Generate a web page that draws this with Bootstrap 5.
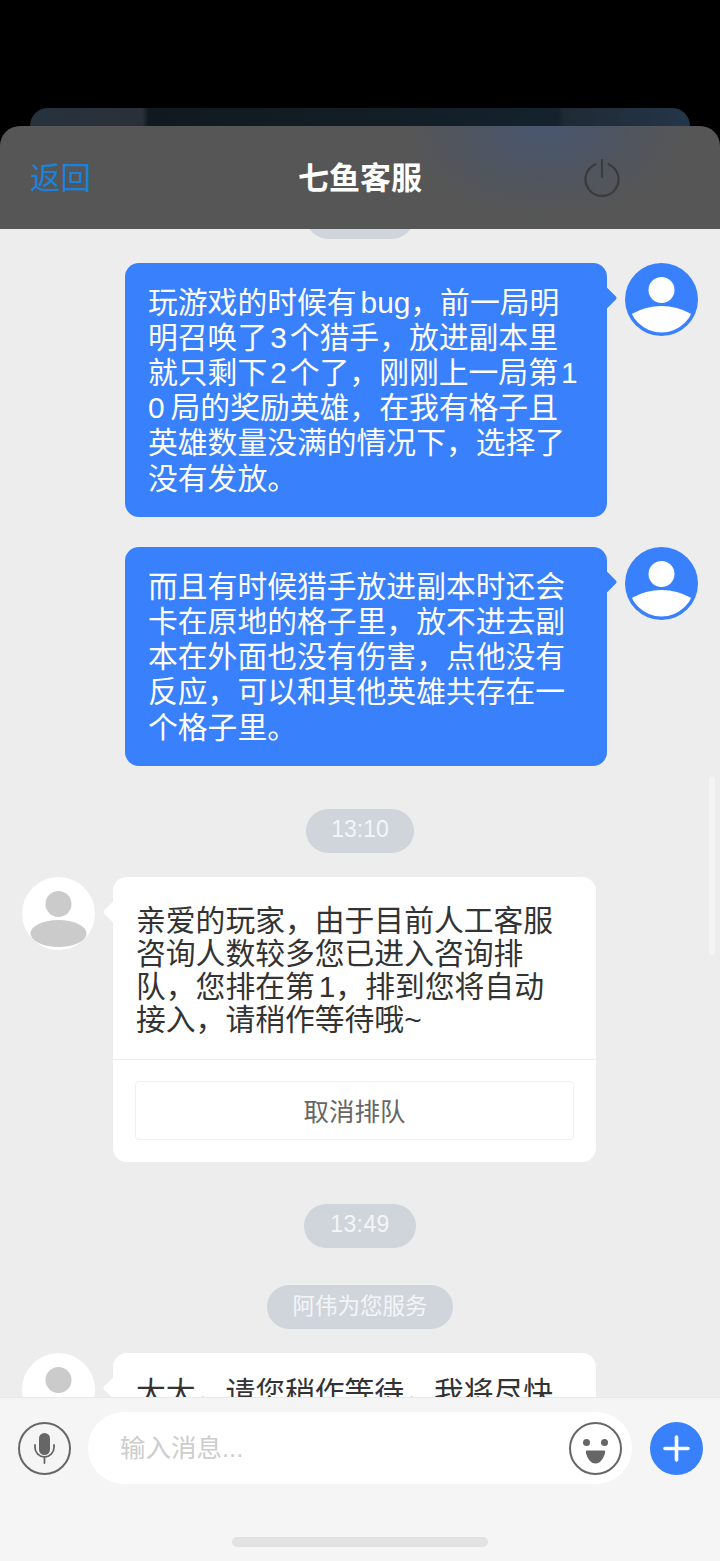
<!DOCTYPE html>
<html lang="zh-CN">
<head>
    <meta charset="UTF-8">
    <meta name="viewport" content="width=device-width, initial-scale=1.0">
    <title>七鱼客服</title>
    <link rel="stylesheet" href="https://cdn.jsdelivr.net/npm/bootstrap@5.3.0/dist/css/bootstrap.min.css">
    <script src="https://cdn.jsdelivr.net/npm/bootstrap@5.3.0/dist/js/bootstrap.bundle.min.js"></script>
    <style>
        html, body { height: 1561px; overflow: hidden; }
        body {
            background: #000;
            font-family: "Liberation Sans", "Noto Sans CJK SC", sans-serif;
        }
        .screen { width: 720px; height: 1561px; padding-top: 108px; }
        .back-sheet {
            height: 18px;
            margin: 0 30px;
            border-radius: 18px 18px 0 0;
            background: linear-gradient(90deg, #27323c 0, #2a303a 17%, #10191f 18%, #14222c 80%, #1f2a34 81%, #24364a 100%);
        }
        .chat-head {
            height: 103px;
            padding: 0 30px 0 30px;
            border-radius: 20px 20px 0 0;
            background: radial-gradient(ellipse 140px 90px at 545px 0, #47566f 0, #4f5560 55%, #565656 100%), #565656;
        }
        .head-back { width: 120px; padding-top: 1px; font-size: 30.5px; color: #1a82dc; line-height: 1; }
        .head-title { padding-top: 1px; font-size: 31px; font-weight: 700; color: #fff; line-height: 1; }
        .head-power { width: 120px; padding-right: 69px; }
        .chat-scroll { height: 1168px; background: #ededed; }
        .chat-flow { margin-top: -34px; position: relative; }
        .scroll-thumb {
            position: absolute; right: 5px; top: 582px;
            width: 6px; height: 178px;
            border-radius: 3px; background: #f4f4f4;
        }
        .time-pill {
            height: 44px; padding: 0 25px;
            border-radius: 22px;
            background: #d0d5dc; color: #f4f5f7;
            font-size: 22.5px; line-height: 43px;
        }
        .time-clock { padding: 0 25.5px; font-size: 23px; line-height: 41px; }
        .time-clock-wide { padding: 0 26px; letter-spacing: .4px; }
        .time-hidden { width: 108px; }
        .msg-row-me { padding-right: 22px; gap: 18px; }
        .msg-row-kf { padding-left: 22px; gap: 18px; }
        .avatar-round { width: 73px; height: 73px; flex: none; display: block; }
        .bubble-me, .bubble-kf {
            position: relative;
            border-radius: 14px;
            font-size: 29.8px;
            white-space: nowrap;
        }
        .bubble-me {
            width: 482px;
            padding: 21.5px 0 21.5px 23px;
            background: #3880fc; color: #fff;
            line-height: 35.2px;
        }
        .bubble-kf {
            width: 483px;
            background: #fff; color: #333;
            line-height: 33px;
        }
        .bubble-me::after, .bubble-kf::before {
            content: ""; position: absolute; top: 27px;
            width: 16px; height: 16px;
            border-radius: 2px;
            transform: rotate(45deg);
        }
        .bubble-me::after { right: -7px; background: #3880fc; }
        .bubble-kf::before { left: -7px; background: #fff; }
        .latin-run { padding: 0 3px; }
        .latin-lead { padding-left: 4px; }
        .kf-text { padding: 27px 0 23px 23px; }
        .kf-text-clip { padding-top: 23px; }
        .kf-action { padding: 21px 22px 22px; border-top: 1px solid #ececec; }
        .cancel-btn {
            height: 59px;
            padding-top: 3px;
            border: 1px solid #f0f0f0; border-radius: 4px;
            font-size: 25.5px; color: #666;
        }
        .gap-a { margin-top: 24px; }
        .gap-b { margin-top: 30px; }
        .gap-c { margin-top: 43px; }
        .gap-e { margin-top: 42px; }
        .gap-f { margin-top: 37px; }
        .input-bar {
            height: 164px;
            padding: 14px 17px 0 18px;
            background: #f5f5f5;
            border-top: 1px solid #e9e9e9;
            position: relative;
        }
        .input-row { height: 72px; }
        .round-icon { width: 53px; height: 53px; flex: none; display: block; }
        .input-pill {
            width: 544px; height: 72px;
            margin: 0 17.5px 0 17px;
            padding: 0 10px 0 32px;
            border-radius: 36px;
            background: #fff;
        }
        .input-hint { font-size: 25.5px; color: #cdcdcd; }
        .home-bar {
            position: absolute; left: 232px; top: 139px;
            width: 256px; height: 10px;
            border-radius: 5px; background: #e2e2e2;
        }
    </style>
</head>
<body>
    <div class="screen d-flex flex-column">
        <div class="back-sheet"></div>

        <header class="chat-head d-flex align-items-center justify-content-between">
            <div class="head-back">返回</div>
            <div class="head-title">七鱼客服</div>
            <div class="head-power d-flex justify-content-end">
                <svg width="38" height="40" viewBox="0 0 38 40" fill="none" stroke="#3b3b3b" stroke-width="2.2" stroke-linecap="round">
                    <path d="M12.500 6.300a16.500 16.500 0 1 0 13 0"/>
                    <path d="M19 2v17"/>
                </svg>
            </div>
        </header>

        <main class="chat-scroll overflow-hidden">
            <div class="chat-flow d-flex flex-column">
                <div class="scroll-thumb"></div>

                <!-- pill scrolled under the header, only its bottom edge shows -->
                <div class="d-flex justify-content-center"><div class="time-pill time-hidden"></div></div>

                <div class="msg-row-me gap-a d-flex justify-content-end align-items-start">
                    <div class="bubble-me">玩游戏的时候有<span class="latin-lead">bug</span>&#xFF0C;前一局明<br>明召唤了<span class="latin-run">3</span>个猎手&#xFF0C;放进副本里<br>就只剩下<span class="latin-run">2</span>个了&#xFF0C;刚刚上一局第<span class="latin-run">1</span><br>0<span class="latin-run"></span>局的奖励英雄&#xFF0C;在我有格子且<br>英雄数量没满的情况下&#xFF0C;选择了<br>没有发放。</div>
                    <svg class="avatar-round" viewBox="0 0 73 73">
                        <defs><clipPath id="meClip"><circle cx="36.5" cy="36.5" r="33"/></clipPath></defs>
                        <circle cx="36.5" cy="36.5" r="36.5" fill="#3880fc"/>
                        <circle cx="36.5" cy="27" r="13" fill="#fff"/>
                        <ellipse cx="36.5" cy="68" rx="40" ry="25" fill="#fff" clip-path="url(#meClip)"/>
                    </svg>
                </div>

                <div class="msg-row-me gap-b d-flex justify-content-end align-items-start">
                    <div class="bubble-me">而且有时候猎手放进副本时还会<br>卡在原地的格子里&#xFF0C;放不进去副<br>本在外面也没有伤害&#xFF0C;点他没有<br>反应&#xFF0C;可以和其他英雄共存在一<br>个格子里。</div>
                    <svg class="avatar-round" viewBox="0 0 73 73">
                        <defs><clipPath id="meClip2"><circle cx="36.5" cy="36.5" r="33"/></clipPath></defs>
                        <circle cx="36.5" cy="36.5" r="36.5" fill="#3880fc"/>
                        <circle cx="36.5" cy="27" r="13" fill="#fff"/>
                        <ellipse cx="36.5" cy="68" rx="40" ry="25" fill="#fff" clip-path="url(#meClip2)"/>
                    </svg>
                </div>

                <div class="gap-c d-flex justify-content-center"><div class="time-pill time-clock">13:10</div></div>

                <div class="msg-row-kf gap-a d-flex align-items-start">
                    <svg class="avatar-round" viewBox="0 0 73 73">
                        <circle cx="36.5" cy="36.5" r="36.5" fill="#fff"/>
                        <circle cx="36.5" cy="27" r="13" fill="#cbcbcb"/>
                        <ellipse cx="36.5" cy="56.5" rx="28" ry="13.5" fill="#cbcbcb"/>
                    </svg>
                    <div class="bubble-kf">
                        <div class="kf-text">亲爱的玩家&#xFF0C;由于目前人工客服<br>咨询人数较多您已进入咨询排<br>队&#xFF0C;您排在第<span class="latin-lead">1</span>&#xFF0C;排到您将自动<br>接入&#xFF0C;请稍作等待哦~</div>
                        <div class="kf-action">
                            <div class="cancel-btn d-flex align-items-center justify-content-center">取消排队</div>
                        </div>
                    </div>
                </div>

                <div class="gap-e d-flex justify-content-center"><div class="time-pill time-clock time-clock-wide">13:49</div></div>

                <div class="gap-f d-flex justify-content-center"><div class="time-pill">阿伟为您服务</div></div>

                <div class="msg-row-kf gap-a d-flex align-items-start">
                    <svg class="avatar-round" viewBox="0 0 73 73">
                        <circle cx="36.5" cy="36.5" r="36.5" fill="#fff"/>
                        <circle cx="36.5" cy="27" r="13" fill="#cbcbcb"/>
                    </svg>
                    <div class="bubble-kf">
                        <div class="kf-text kf-text-clip">大大&#xFF0C;请您稍作等待&#xFF0C;我将尽快</div>
                    </div>
                </div>
            </div>
        </main>

        <footer class="input-bar">
            <div class="input-row d-flex align-items-center">
                <svg class="round-icon" viewBox="0 0 53 53" fill="none">
                    <circle cx="26.5" cy="26.5" r="25.5" stroke="#666" stroke-width="2"/>
                    <rect x="21" y="11" width="11" height="22" rx="5.5" fill="#666"/>
                    <path d="M17 23v2.500a9.500 9.500 0 0 0 19 0V23M26.500 35v6" stroke="#666" stroke-width="1.800" stroke-linecap="round"/>
                </svg>
                <div class="input-pill d-flex align-items-center justify-content-between">
                    <span class="input-hint">输入消息...</span>
                    <svg class="round-icon" viewBox="0 0 53 53" fill="none">
                        <circle cx="26.5" cy="26.5" r="25.5" stroke="#666" stroke-width="2"/>
                        <circle cx="17.500" cy="20.500" r="3.500" fill="#666"/>
                        <circle cx="35.500" cy="20.500" r="3.500" fill="#666"/>
                        <path d="M18 28.500h17a1.200 1.200 0 0 1 1.200 1.400c-1 6-5 11.600-9.700 11.600s-8.700-5.600-9.700-11.600a1.200 1.200 0 0 1 1.200-1.400z" fill="#666"/>
                    </svg>
                </div>
                <svg class="round-icon" viewBox="0 0 53 53" fill="none">
                    <circle cx="26.500" cy="26.500" r="26.500" fill="#3880fc"/>
                    <path d="M26.500 15v23M15 26.500h23" stroke="#fff" stroke-width="3.600" stroke-linecap="round"/>
                </svg>
            </div>
            <div class="home-bar"></div>
        </footer>
    </div>
</body>
</html>
